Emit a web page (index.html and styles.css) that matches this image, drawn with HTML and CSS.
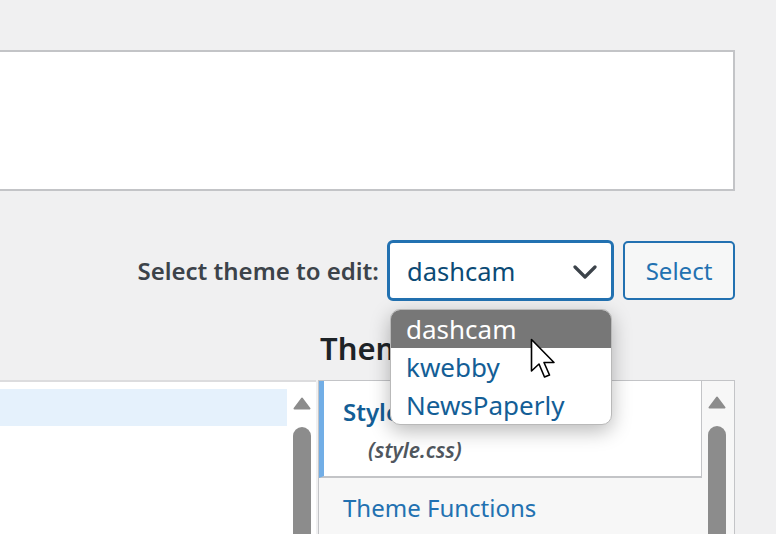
FILE: index.html
```html
<!DOCTYPE html>
<html lang="en">
<head>
<meta charset="utf-8">
<title>Edit Themes</title>
<link rel="stylesheet" href="styles.css">
</head>
<body>
<div class="page">
  <div class="content-box"></div>

  <div class="theme-bar">
    <label class="theme-label" for="theme">Select theme to edit:</label>
    <div class="select-wrap">
      <div class="select" id="theme">
        <span class="select-value">dashcam</span>
        <svg class="chevron" width="24" height="16" viewBox="0 0 24 16"><polyline points="2,3 12,13 22,3" fill="none" stroke="#3c434a" stroke-width="3.2" stroke-linecap="round" stroke-linejoin="round"/></svg>
      </div>
      <ul class="dropdown">
        <li class="option active">dashcam</li>
        <li class="option">kwebby</li>
        <li class="option">NewsPaperly</li>
      </ul>
    </div>
    <button class="btn">Select</button>
  </div>

  <div class="editor">
    <h2 class="files-title">Theme Files</h2>
    <div class="code-panel">
      <div class="code-lines"><div class="line-hl"></div></div>
      <div class="scrollbar">
        <svg class="arrow-up" width="18" height="13" viewBox="0 0 18 13"><path d="M9 1.5 L16.5 11.5 L1.5 11.5 Z" fill="#8c8c8c" stroke="#8c8c8c" stroke-width="2" stroke-linejoin="round"/></svg>
        <div class="thumb"></div>
      </div>
    </div>
    <div class="files-panel">
      <ul class="file-list">
        <li class="file current">
          <span class="file-name">Stylesheet</span>
          <span class="file-path">(style.css)</span>
        </li>
        <li class="file"><span class="file-link">Theme Functions</span></li>
      </ul>
      <div class="scrollbar">
        <svg class="arrow-up" width="18" height="13" viewBox="0 0 18 13"><path d="M9 1.5 L16.5 11.5 L1.5 11.5 Z" fill="#8c8c8c" stroke="#8c8c8c" stroke-width="2" stroke-linejoin="round"/></svg>
        <div class="thumb"></div>
      </div>
    </div>
  </div>

  <svg class="cursor" width="26" height="42" viewBox="0 0 26 42"><path d="M1.5 1.5 L1.5 33 L9 26 L14.5 39 L19.5 37 L14 24.5 L24 24.5 Z" fill="#fff" stroke="#000" stroke-width="1.6" stroke-linejoin="round"/></svg>
</div>
</body>
</html>
```

FILE: styles.css
```css
* { box-sizing: border-box; }

body {
  margin: 0;
  background: #f0f0f1;
  font-family: "Noto Sans", "Open Sans", sans-serif;
  color: #3c434a;
}

.page {
  position: relative;
  width: 776px;
  height: 534px;
  overflow: hidden;
}

.content-box {
  margin: 50px 0 0 -10px;
  width: 745px;
  height: 141px;
  background: #fff;
  border: 2px solid #c3c4c7;
}

.theme-bar {
  display: flex;
  justify-content: flex-end;
  align-items: center;
  margin-top: 49px;
  padding-right: 41px;
}

.theme-label {
  font-size: 24px;
  font-weight: 600;
  color: #3c434a;
  margin-right: 8px;
}

.select-wrap {
  position: relative;
}

.select {
  width: 227px;
  height: 61px;
  border: 3px solid #2271b1;
  border-radius: 6px;
  background: #fff;
  display: flex;
  align-items: center;
  justify-content: space-between;
  padding: 0 14px 0 17px;
}

.select-value {
  font-size: 25.5px;
  color: #0b4a75;
}

.chevron { margin-top: 2px; }

.dropdown {
  position: absolute;
  top: 69px;
  left: 3px;
  width: 222px;
  margin: 0;
  padding: 0;
  list-style: none;
  background: #fff;
  border: 1px solid #b9b9b9;
  border-radius: 10px;
  overflow: hidden;
  box-shadow: 0 6px 20px rgba(0, 0, 0, 0.28);
  z-index: 5;
}

.option {
  height: 38px;
  line-height: 38px;
  padding-left: 15px;
  font-size: 26px;
  color: #135e96;
}

.option.active {
  background: #777;
  color: #fff;
}

.btn {
  margin-left: 9px;
  width: 112px;
  height: 59px;
  border: 2px solid #2271b1;
  border-radius: 5px;
  background: #f6f7f7;
  color: #2271b1;
  font-family: inherit;
  font-size: 24px;
  padding: 0;
}

.editor {
  display: grid;
  grid-template-columns: 326px 417px;
  grid-template-rows: auto auto;
  column-gap: 2px;
  margin: 27px 0 0 -10px;
}

.files-title {
  grid-column: 2;
  grid-row: 1;
  margin: 0 0 12px 2px;
  font-size: 31px;
  line-height: 40px;
  font-weight: 600;
  color: #1d2327;
}

.code-panel {
  grid-column: 1;
  grid-row: 2;
  height: 160px;
  background: #fff;
  border-top: 2px solid #dcdcde;
  display: flex;
}

.code-lines {
  flex: 1;
  padding-top: 7px;
}

.line-hl {
  height: 37px;
  background: #e5f1fc;
}

.scrollbar {
  width: 18px;
  display: flex;
  flex-direction: column;
  align-items: center;
  padding-top: 15px;
}

.code-panel .scrollbar { margin: 0 5px 0 6px; }

.arrow-up { display: block; }

.thumb {
  margin-top: 17px;
  width: 18px;
  flex: 1;
  background: #8c8c8c;
  border-radius: 9px 9px 0 0;
}

.files-panel {
  grid-column: 2;
  grid-row: 2;
  height: 160px;
  background: #f7f7f7;
  border: 1px solid #c3c4c7;
  border-bottom: none;
  display: flex;
}

.file-list {
  width: 383px;
  margin: 0 6px 0 0;
  padding: 0;
  list-style: none;
}

.file {
  padding-left: 24px;
}

.file.current {
  height: 97px;
  background: #fff;
  border-left: 5px solid #72aee6;
  border-right: 1px solid #c3c4c7;
  border-bottom: 2px solid #c3c4c7;
  padding: 13px 0 0 19px;
  display: flex;
  flex-direction: column;
}

.file-name {
  font-size: 24px;
  font-weight: 600;
  line-height: 36px;
  color: #135e96;
}

.file-path {
  font-size: 21px;
  font-style: italic;
  font-weight: 600;
  line-height: 36px;
  color: #50575e;
  padding: 2px 0 0 25px;
}

.file-link {
  display: block;
  padding-top: 12px;
  font-size: 24px;
  line-height: 36px;
  color: #2271b1;
}

.cursor {
  position: absolute;
  left: 530px;
  top: 338px;
  z-index: 10;
}
```
